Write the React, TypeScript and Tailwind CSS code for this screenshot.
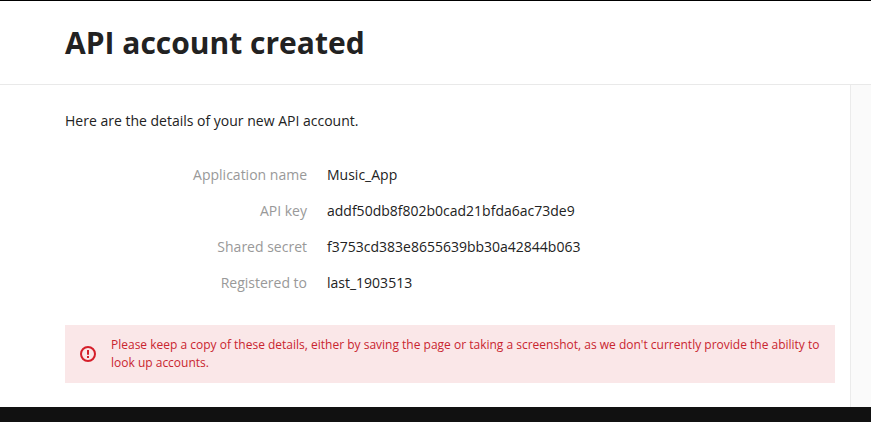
const details = [
  ["Application name", "Music_App"],
  ["API key", "addf50db8f802b0cad21bfda6ac73de9"],
  ["Shared secret", "f3753cd383e8655639bb30a42844b063"],
  ["Registered to", "last_1903513"],
];

function AlertIcon() {
  return (
    <svg className="h-4 w-4 shrink-0" viewBox="0 0 16 16" fill="none" stroke="#d51f2a" strokeWidth="2">
      <circle cx="8" cy="8" r="7" />
      <path d="M8 4v4.8M8 10v2" />
    </svg>
  );
}

export default function App() {
  return (
    <div className="flex h-[422px] w-[871px] flex-col overflow-hidden bg-white font-['Open_Sans',sans-serif] text-[#222]">
      <div className="h-px bg-black" />
      <header className="flex h-[84px] items-center border-b border-[#e9e9e9] pl-[65px]">
        <h1 className="text-[30px] leading-9 font-bold">API account created</h1>
      </header>
      <div className="flex h-[322px]">
        <main className="w-[850px] pt-6 pr-[15px] pl-[65px]">
          <p className="text-sm leading-6">Here are the details of your new API account.</p>
          <dl className="mt-[30px] text-sm leading-6">
            {details.map(([label, value]) => (
              <div key={label} className="mb-3 flex gap-5">
                <dt className="w-[242px] text-right text-[#999]">{label}</dt>
                <dd>{value}</dd>
              </div>
            ))}
          </dl>
          <div className="mt-[30px] flex h-[58px] items-center bg-[#fae7e8] pl-[15px] text-[#c9252f]">
            <AlertIcon />
            <p className="ml-[15px] w-[715px] text-xs leading-[18px]">
              Please keep a copy of these details, either by saving the page or taking a screenshot, as we don't currently provide the ability to look up accounts.
            </p>
          </div>
        </main>
        <aside className="flex-1 border-l border-[#ebebeb] bg-[#fafafa]" />
      </div>
      <footer className="h-[15px] bg-[#111]" />
    </div>
  );
}
